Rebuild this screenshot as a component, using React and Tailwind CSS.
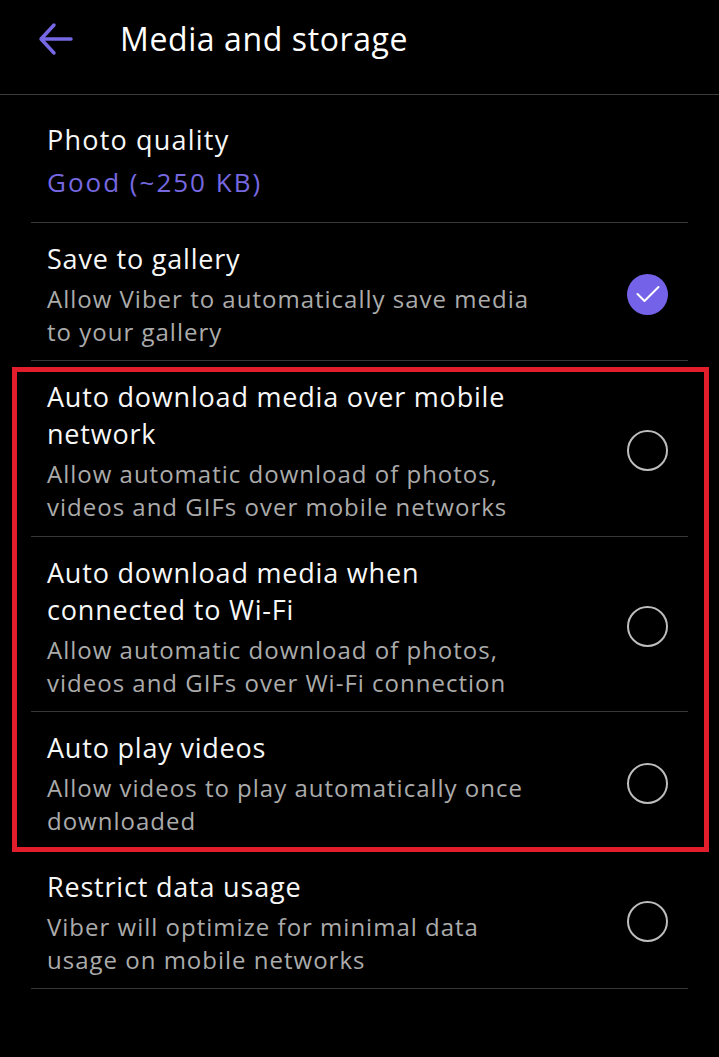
import React from 'react';

const rows = [
    {
        title: ['Save to gallery'],
        sub: ['Allow Viber to automatically save media', 'to your gallery'],
        checked: true
    },
    {
        title: ['Auto download media over mobile', 'network'],
        sub: ['Allow automatic download of photos,', 'videos and GIFs over mobile networks'],
        checked: false
    },
    {
        title: ['Auto download media when', 'connected to Wi-Fi'],
        sub: ['Allow automatic download of photos,', 'videos and GIFs over Wi-Fi connection'],
        checked: false
    },
    {
        title: ['Auto play videos'],
        sub: ['Allow videos to play automatically once', 'downloaded'],
        checked: false
    },
    {
        title: ['Restrict data usage'],
        sub: ['Viber will optimize for minimal data', 'usage on mobile networks'],
        checked: false
    }
];

function Check({ checked }) {
    if (checked) {
        return (
            <div className="w-[41px] h-[41px] rounded-full bg-[#7463e8] flex items-center justify-center shrink-0">
                <svg width="26" height="26" viewBox="0 0 26 26" fill="none" stroke="white" strokeWidth="2" strokeLinecap="round" strokeLinejoin="round">
                    <path d="M2.5 13l7 7L23.5 6" />
                </svg>
            </div>
        );
    }
    return <div className="w-[41px] h-[41px] rounded-full border-2 border-[#bdbdbd] shrink-0" />;
}

function Row({ row }) {
    return (
        <div className="flex items-center justify-between border-b border-[#383838] pl-4 pr-[20px] pt-[17px] pb-[12.4px]">
            <div className="flex flex-col gap-[5px]">
                <div className="text-[27px] leading-[37px] tracking-[0.8px] text-[#f7f7f7]">
                    {row.title.map((line) => (
                        <div key={line}>{line}</div>
                    ))}
                </div>
                <div className="text-[24px] leading-[33px] tracking-[1px] text-[#ababab]">
                    {row.sub.map((line) => (
                        <div key={line}>{line}</div>
                    ))}
                </div>
            </div>
            <Check checked={row.checked} />
        </div>
    );
}

export default function App() {
    return (
        <div className="relative w-full min-h-[1057px] bg-black" style={{ fontFamily: '"Open Sans", "Noto Sans", sans-serif' }}>
            <div className="h-[95px] border-b border-[#3c3c3c]">
                <div className="h-[78px] flex items-center">
                    <div className="w-[120px] flex justify-start pl-[38px]">
                        <svg width="36" height="34" viewBox="0 0 36 34" fill="none" stroke="#7668e4" strokeWidth="3.5" strokeLinecap="round" strokeLinejoin="round">
                            <path d="M33 17H4M16 3L3 17l13 14" />
                        </svg>
                    </div>
                    <h1 className="text-[32px] tracking-[0.6px] text-white">Media and storage</h1>
                </div>
            </div>

            <div className="px-[31px]">
                <div className="border-b border-[#383838] pl-4 pt-[26px] pb-[21px] flex flex-col gap-[6px]">
                    <div className="text-[27px] leading-[37px] tracking-[1.2px] text-[#f7f7f7]">Photo quality</div>
                    <div className="text-[26px] leading-[37px] tracking-[2px] text-[#7668e0]">Good (~250 KB)</div>
                </div>
                {rows.map((row) => (
                    <Row key={row.title[0]} row={row} />
                ))}
            </div>

            {/* red annotation box drawn over the three auto rows */}
            <div className="absolute left-[12px] top-[367px] w-[697px] h-[485px] border-[5px] border-[#e21d2c] pointer-events-none" />
        </div>
    );
}
